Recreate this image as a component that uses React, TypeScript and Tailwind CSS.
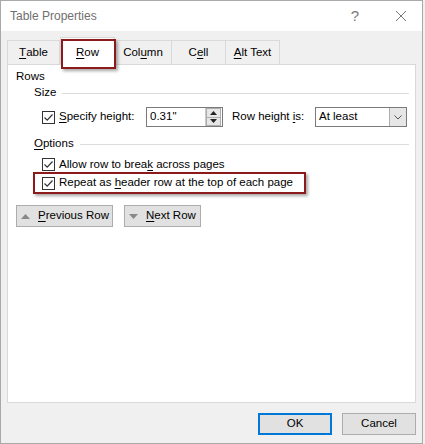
import React from 'react';

const font = { fontFamily: '"Liberation Sans", Arial, sans-serif' };

function U({ children }: { children: React.ReactNode }) {
  return <span className="underline underline-offset-2">{children}</span>;
}

function Check() {
  return (
    <span className="w-[13px] h-[13px] border border-[#333333] bg-white flex items-center justify-center shrink-0">
      <svg width="11" height="11" viewBox="0 0 11 11">
        <path d="M1.5 5.5 L4.2 8.2 L9.5 2.5" fill="none" stroke="#333" strokeWidth="1.2" />
      </svg>
    </span>
  );
}

function Tab({ children, selected, w }: { children: React.ReactNode; selected?: boolean; w: string }) {
  return (
    <div
      className={
        selected
          ? `${w} h-[28px] -mb-px bg-white border border-[#d9d9d9] border-b-0 flex items-center justify-center pt-[2px] relative z-10`
          : `${w} h-[24px] bg-[#f0f0f0] border border-[#d9d9d9] border-b-0 -ml-px flex items-center justify-center`
      }
    >
      {children}
    </div>
  );
}

function Group({ label, children }: { label: React.ReactNode; children: React.ReactNode }) {
  return (
    <div className="pl-[26px] pr-[6px]">
      <div className="flex items-center gap-[6px] h-[16px]">
        <span>{label}</span>
        <div className="flex-1 h-px bg-[#dcdcdc]" />
      </div>
      {children}
    </div>
  );
}

export default function App() {
  return (
    <div className="w-[425px] h-[444px] bg-[#f0f0f0] text-[11.5px] text-black whitespace-nowrap" style={font}>
      <div className="w-[423px] h-[444px] border border-[#a9a9a9] flex flex-col bg-[#f0f0f0]">
        {/* title bar */}
        <div className="h-[30px] bg-white flex items-center pl-[9px] shrink-0">
          <span className="text-[12px] text-[#707070] flex-1">Table Properties</span>
          <span className="text-[15px] text-[#7a7a7a] w-[20px] text-center mr-[30px]">?</span>
          <svg width="12" height="12" viewBox="0 0 12 12" className="mr-[15px]">
            <path d="M1 1 L11 11 M11 1 L1 11" stroke="#777" strokeWidth="1" />
          </svg>
        </div>

        {/* body */}
        <div className="flex-1 px-[6px] pt-[6px] relative">
          <div className="flex items-end h-[27px] pl-[1px]">
            <Tab w="w-[53px]">
              <U>T</U>able
            </Tab>
            <Tab w="w-[55px]" selected>
              <U>R</U>ow
            </Tab>
            <Tab w="w-[58px]">
              Col<U>u</U>mn
            </Tab>
            <Tab w="w-[55px]">
              C<U>e</U>ll
            </Tab>
            <Tab w="w-[55px]">
              <U>A</U>lt Text
            </Tab>
          </div>
          {/* red highlight over Row tab */}
          <div className="absolute left-[60px] top-[8px] w-[55px] h-[30px] border-2 border-[#8c1a1a] shadow-[2px_2px_3px_rgba(0,0,0,0.35)] z-20" />

          <div className="w-[409px] h-[339px] bg-white border border-[#d9d9d9] pt-[4px]">
            <div className="pl-[8px] h-[16px] flex items-center">Rows</div>
            <Group label="Size">
              <div className="flex items-center h-[20px] mt-[6px] pl-[8px]">
                <Check />
                <span className="ml-[4px] w-[87px]">
                  <U>S</U>pecify height:
                </span>
                <div className="w-[77px] h-[20px] border border-[#7a7a7a] flex items-center">
                  <span className="flex-1 pl-[3px]">0.31"</span>
                  <div className="w-[16px] h-[18px] flex flex-col border-l border-[#c8c8c8] mr-[1px]">
                    <div className="flex-1 bg-[#e6e6e6] border border-[#adadad] flex items-center justify-center">
                      <svg width="7" height="4" viewBox="0 0 7 4"><path d="M0 4 L3.5 0 L7 4 Z" fill="#222" /></svg>
                    </div>
                    <div className="flex-1 bg-[#e6e6e6] border border-t-0 border-[#adadad] flex items-center justify-center">
                      <svg width="7" height="4" viewBox="0 0 7 4"><path d="M0 0 L3.5 4 L7 0 Z" fill="#222" /></svg>
                    </div>
                  </div>
                </div>
                <span className="ml-[9px] w-[83px]">
                  Row height <U>i</U>s:
                </span>
                <div className="w-[92px] h-[20px] border border-[#7a7a7a] flex items-center">
                  <span className="flex-1 pl-[3px]">At least</span>
                  <div className="w-[17px] h-[18px] bg-[#e6e6e6] border-l border-[#adadad] flex items-center justify-center">
                    <svg width="8" height="5" viewBox="0 0 8 5"><path d="M0.5 0.5 L4 4 L7.5 0.5" fill="none" stroke="#555" strokeWidth="1" /></svg>
                  </div>
                </div>
              </div>
            </Group>
            <div className="h-[9px]" />
            <Group
              label={
                <>
                  <U>O</U>ptions
                </>
              }
            >
              <div className="flex items-center gap-[4px] h-[17px] mt-[4px] pl-[8px]">
                <Check />
                <span>
                  Allow row to brea<U>k</U> across pages
                </span>
              </div>
              <div className="flex items-center gap-[4px] h-[22px] w-[273px] -mt-[1px] -ml-[1px] pl-[7px] border-2 border-[#8c1a1a] shadow-[2px_2px_3px_rgba(0,0,0,0.35)]">
                <Check />
                <span>
                  Repeat as <U>h</U>eader row at the top of each page
                </span>
              </div>
            </Group>
            <div className="flex gap-[11px] pl-[8px] mt-[11px]">
              <button className="w-[97px] h-[22px] bg-[#e1e1e1] border border-[#adadad] flex items-center pl-[4px] gap-[8px]">
                <svg width="9" height="5" viewBox="0 0 9 5" className="shrink-0"><path d="M0 5 L4.5 0 L9 5 Z" fill="#888" /></svg>
                <span>
                  <U>P</U>revious Row
                </span>
              </button>
              <button className="w-[77px] h-[22px] bg-[#e1e1e1] border border-[#adadad] flex items-center pl-[4px] gap-[8px]">
                <svg width="9" height="5" viewBox="0 0 9 5" className="shrink-0"><path d="M0 0 L4.5 5 L9 0 Z" fill="#888" /></svg>
                <span>
                  <U>N</U>ext Row
                </span>
              </button>
            </div>
          </div>

          <div className="flex justify-end gap-[10px] mt-[10px]">
            <button className="w-[74px] h-[22px] bg-[#e1e1e1] border-2 border-[#0078d7] flex items-center justify-center">
              OK
            </button>
            <button className="w-[74px] h-[22px] bg-[#e1e1e1] border border-[#adadad] flex items-center justify-center">
              Cancel
            </button>
          </div>
        </div>
      </div>
    </div>
  );
}
